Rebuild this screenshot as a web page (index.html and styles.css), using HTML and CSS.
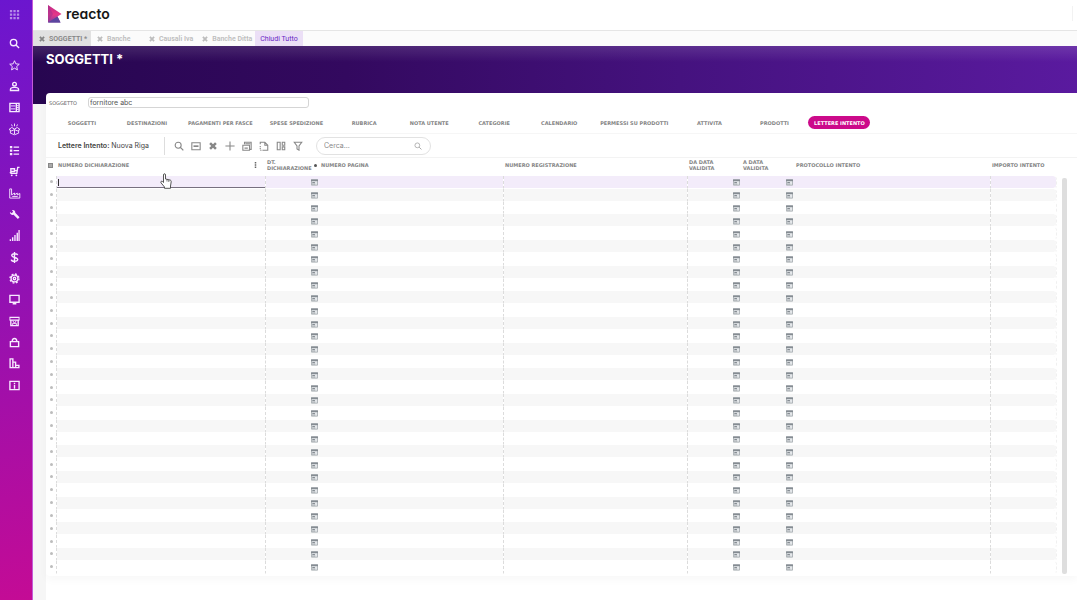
FILE: index.html
```html
<!DOCTYPE html>
<html lang="it">
<head>
<meta charset="utf-8">
<title>Reacto - Soggetti</title>
<link rel="stylesheet" href="styles.css">
</head>
<body>
<svg class="defs" aria-hidden="true">
  <symbol id="close" viewBox="0 0 10 10"><path d="M1.5 1.5 8.500 8.500M8.500 1.500 1.500 8.500" stroke="currentColor" stroke-width="3"/></symbol>
  <symbol id="search" viewBox="0 0 12 12"><circle cx="5" cy="5" r="3.600" fill="none" stroke="currentColor" stroke-width="1.300"/><path d="M7.700 7.700 11.200 11.200" stroke="currentColor" stroke-width="1.500"/></symbol>
  <symbol id="calendar" viewBox="0 0 8 8"><path d="M.5 1h7v6h-7z" fill="#e4e7ea" stroke="#a5abb0"/><path d="M0 .5h8v2H0z" fill="#858c92"/><path d="M1.500 3.500h3v1h-3zM1.500 5.200h1.500v1H1.500zM3.700 5.200h1v1h-1z" fill="#858c92"/></symbol>
</svg>
<div class="app">
  <nav class="sidebar" aria-label="Menu principale">
    <button class="apps" aria-label="Applicazioni"><svg viewBox="0 0 12 12"><path d="M1 1h2.500v2.500H1zM4.800 1h2.500v2.500H4.800zM8.600 1h2.500v2.500H8.600zM1 4.800h2.500v2.500H1zM4.800 4.800h2.500v2.500H4.800zM8.600 4.800h2.500v2.500H8.600zM1 8.600h2.500v2.500H1zM4.800 8.600h2.500v2.500H4.800zM8.600 8.600h2.500v2.500H8.600z" fill="#b58be8"/></svg></button>
    <div class="menu">
      <button aria-label="Cerca"><svg viewBox="0 0 12 12"><circle cx="5" cy="5" r="3.500"/><path d="M7.600 7.600 11 11"/></svg></button>
      <button aria-label="Preferiti"><svg viewBox="0 0 12 12"><path class="thin" d="m6 .8 1.500 3.400 3.700.4-2.800 2.500.8 3.700L6 8.900l-3.200 1.900.8-3.700L.8 4.600l3.700-.4z"/></svg></button>
      <button aria-label="Soggetti"><svg viewBox="0 0 12 12"><circle cx="6" cy="3.500" r="2"/><path d="M1.600 10.400V9c0-1.200 2.400-2 4.400-2s4.400.8 4.400 2v1.400z"/></svg></button>
      <button aria-label="Documenti"><svg viewBox="0 0 12 12"><path d="M1 1.500h10v9H1zM8 1.500v9"/><path class="thin" d="M2 4.300h5M2 7.500h5M8.500 4h2M8.500 6h2M8.500 8h2"/></svg></button>
      <button aria-label="Magazzino"><svg viewBox="0 0 12 12"><path class="thin" d="m0 6 3-2.200L6 5.500l3-1.700L12 6 9 7.500 6 6 3 7.500zM1.500 7v3L6 11.700l4.500-1.700V7M6 6v5M6-.5v3M2.700.5l1 2M9.300.5l-1 2"/></svg></button>
      <button aria-label="Elenchi"><svg viewBox="0 0 12 12"><path d="M1 1h2.600v2.600H1zM1 4.800h2.600v2.600H1zM1 8.600h2.600v2.600H1z" class="solid"/><path d="M5 2.300h6M5 6.100h6M5 9.900h6"/></svg></button>
      <button aria-label="Acquisti"><svg viewBox="0 0 12 12"><path d="M11.500 1.500h-2L8.500 8H2M2 3h4v3H2zM6 5h3M1 8l2-2"/><circle class="solid" cx="3" cy="10.200" r="1"/><circle class="solid" cx="8" cy="10.200" r="1"/></svg></button>
      <button aria-label="Produzione"><svg viewBox="0 0 12 12"><path class="thin" d="M.8 11V1h2v6.500L6 5.500v2l3-2v2l2.800-1.500v5zM3.500 9.200h6"/></svg></button>
      <button aria-label="Strumenti"><svg viewBox="0 0 12 12"><path class="solid" d="M1 3.200 3 4.500 4.500 3 3.200 1.200c2-.6 4 .8 3.600 3L11.500 9 9.700 10.900 5 6.300C3 7 .6 5.200 1 3.200z"/></svg></button>
      <button aria-label="Statistiche"><svg viewBox="0 0 12 12"><path d="M1.500 12v-2M4 12V8M6.500 12V5.500M9 12V3"/><path class="wide" d="M11 12V0"/></svg></button>
      <button aria-label="Contabilità"><svg viewBox="0 0 12 12"><path d="M9.500 3.500C9 1.300 3 1.300 3 3.800S9.500 5.700 9.500 8.300 2.700 10.800 2.500 8.300M6 0v12"/></svg></button>
      <button aria-label="Impostazioni"><svg viewBox="0 0 12 12"><circle cx="6" cy="6" r="3.700"/><circle cx="6" cy="6" r="1.300"/><circle cx="6" cy="6" r="4.900" stroke-dasharray="2 1.850"/></svg></button>
      <button aria-label="Schermo"><svg viewBox="0 0 12 12"><path d="M1 1.500h10v7.500H1zM4 10.700h4"/></svg></button>
      <button aria-label="Negozio"><svg viewBox="0 0 12 12"><path d="M.5 1.500h11M1 4.500h10M2 5v5.500h8V5"/><path class="thin" d="M1 2v3M11 2v3M4 5l2 3 2-3M4 10.500V8h4v2.500"/></svg></button>
      <button aria-label="Vendite"><svg viewBox="0 0 12 12"><path d="M1.500 5h9v5.500h-9zM3.500 5c0-4.400 5-4.400 5 0"/></svg></button>
      <button aria-label="Report"><svg viewBox="0 0 12 12"><path d="M1.200 1h3v9.500h-3zM4.200 4.500h3v6h-3zM7.200 8h3.600v2.500H7.200z"/></svg></button>
      <button aria-label="Informazioni"><svg viewBox="0 0 12 12"><path d="M1 1.500h10v9H1zM6 3v1.500M6 5.500v4"/></svg></button>
    </div>
  </nav>

  <main class="main">
    <header class="brand">
      <svg class="logo" viewBox="0 0 14 18"><defs><linearGradient id="lg" x1="0" y1="0" x2="0" y2="1"><stop offset="0" stop-color="#c02a86"/><stop offset=".55" stop-color="#e63888"/><stop offset="1" stop-color="#7d3fa0"/></linearGradient></defs><path d="M0 0 13.500 9 9.500 11.500 12.500 17.500H0z" fill="url(#lg)"/><path d="M0 17.500 9.500 11.500 12.500 17.500z" fill="#5b469f"/><path d="M0 0v17L5 9z" fill="#a43290" opacity=".6"/></svg>
      <span class="wordmark">reacto</span>
      <span class="brand-end"></span>
    </header>
    <div class="windows">
      <button class="window current"><svg><use href="#close"/></svg>SOGGETTI *</button>
      <button class="window"><svg><use href="#close"/></svg>Banche</button>
      <button class="window"><svg><use href="#close"/></svg>Causali Iva</button>
      <button class="window"><svg><use href="#close"/></svg>Banche Ditta</button>
      <button class="close-all">Chiudi Tutto</button>
    </div>
    <div class="hero"><h1>SOGGETTI *</h1></div>

    <section class="panel">
      <div class="subject">
        <label for="subject">SOGGETTO</label>
        <input id="subject" type="text" value="fornitore abc">
      </div>
      <div class="tabs">
        <button>SOGGETTI</button>
        <button>DESTINAZIONI</button>
        <button>PAGAMENTI PER FASCE</button>
        <button>SPESE SPEDIZIONE</button>
        <button>RUBRICA</button>
        <button>NOTA UTENTE</button>
        <button>CATEGORIE</button>
        <button>CALENDARIO</button>
        <button>PERMESSI SU PRODOTTI</button>
        <button>ATTIVITA</button>
        <button>PRODOTTI</button>
        <button class="active">LETTERE INTENTO</button>
      </div>
      <div class="toolbar">
        <p class="status"><b>Lettere Intento:</b> Nuova Riga</p>
        <div class="tools">
          <button aria-label="Cerca"><svg><use href="#search"/></svg></button>
          <button aria-label="Modifica"><svg viewBox="0 0 12 12"><path d="M1 2h10v8.500H1z"/><path class="bold" d="M3 6.200h6"/></svg></button>
          <button aria-label="Elimina"><svg viewBox="0 0 12 12"><path class="heavy" d="m2.500 2.500 7 7M9.500 2.500l-7 7"/></svg></button>
          <button aria-label="Aggiungi"><svg viewBox="0 0 12 12"><path d="M6 .5v11M.5 6h11"/></svg></button>
          <button aria-label="Salva"><svg viewBox="0 0 12 12"><path d="M3 4V1.500h8V10H9M1 5h8v6H1zM4 3.300h6M3 8.500h4"/></svg></button>
          <button aria-label="Nuovo documento"><svg viewBox="0 0 12 12"><path d="M1.500 4V1.500H7L10.500 5v6h-6M7 1.500V5h3.500"/><path d="M1.500 6v5h3" stroke-dasharray="1.500 1"/></svg></button>
          <button aria-label="Colonne"><svg viewBox="0 0 12 12"><path d="M1.500 1.500h3.500v9H1.500zM7.500 1.500h3v3.500h-3zM7.500 7h3v3.500h-3z"/></svg></button>
          <button aria-label="Filtra"><svg viewBox="0 0 12 12"><path d="M1.500 1.500h9L7.200 6v5L4.800 9.500V6z"/></svg></button>
        </div>
        <div class="find">
          <input type="search" aria-label="Cerca" placeholder="Cerca...">
          <svg><use href="#search"/></svg>
        </div>
      </div>
      <div class="grid">
        <table>
          <colgroup><col class="c-mark"><col class="c-number"><col class="c-date"><col class="c-page"><col class="c-page"><col class="c-date"><col class="c-until"><col><col class="c-amount"></colgroup>
          <thead>
            <tr>
              <th><input type="checkbox" checked aria-label="Seleziona tutto"></th>
              <th><span class="head">NUMERO DICHIARAZIONE <button class="more" aria-label="Opzioni colonna"><svg viewBox="0 0 4 8"><path d="M1 0h2v2H1zM1 3h2v2H1zM1 6h2v2H1z" fill="#666"/></svg></button></span></th>
              <th><span class="head">DT.<br>DICHIARAZIONE <svg class="sort" viewBox="0 0 4 4"><circle cx="2" cy="2" r="2" fill="#555"/></svg></span></th>
              <th>NUMERO PAGINA</th>
              <th>NUMERO REGISTRAZIONE</th>
              <th>DA DATA<br>VALIDITA</th>
              <th>A DATA<br>VALIDITA</th>
              <th>PROTOCOLLO INTENTO</th>
              <th>IMPORTO INTENTO</th>
            </tr>
          </thead>
          <tbody id="rows"></tbody>
        </table>
        <div class="scroll"></div>
        <svg class="pointer" viewBox="0 0 12 16"><path d="M3.500 9.500V2c0-1.700 2-1.700 2 0v4l4.500 1c1 .3 1.300.8 1.200 1.800L10.500 13v2.300h-6V14L1 9.800c-.8-1.200.8-2.200 1.600-1.200z" fill="#fff" stroke="#444" stroke-width=".9"/><path d="M7 6.500v2M8.800 7v2" stroke="#444" stroke-width=".7"/></svg>
      </div>
    </section>
  </main>
</div>
<script src="rows.js"></script>
</body>
</html>
```

FILE: rows.js
```js
const body = document.getElementById("rows");
const picker = '<button class="date" aria-label="Scegli data"><svg><use href="#calendar"/></svg></button>';
const dateColumns = [2, 5, 6];
for (let r = 0; r < 31; r++) {
  const tr = body.insertRow();
  for (let c = 0; c < 9; c++) {
    const td = tr.insertCell();
    if (c === 0) td.innerHTML = '<i class="dot"></i>';
    if (dateColumns.includes(c)) td.innerHTML = picker;
    if (r === 0 && c === 1) td.innerHTML = '<input class="edit" type="text" aria-label="Numero dichiarazione">';
  }
}
```

FILE: styles.css
```css
* { box-sizing: border-box; }
body { margin: 0; font-family: Inter, "Liberation Sans", sans-serif; font-size: 7px; color: #555; background: #fff; }
button { margin: 0; padding: 0; border: 0; background: none; font: inherit; color: inherit; white-space: nowrap; }
svg { display: block; flex: none; }
.defs { position: absolute; width: 0; height: 0; }
.app { display: flex; min-height: 100vh; }

.sidebar { flex: none; width: 33px; padding: 8px 4px 0 0; background: linear-gradient(170deg, #6b16cf, #8c12b6 42%, #c40b95); border-right: 1px solid #c45bd8; display: flex; flex-direction: column; align-items: center; }
.sidebar button { display: grid; place-items: center; }
.sidebar svg { width: 11px; height: 11px; }
.apps { height: 12px; }
.menu { margin-top: 13px; height: 363px; display: grid; grid-auto-rows: 1fr; }
.menu svg { fill: none; stroke: #f7eaff; stroke-width: 1.5; overflow: visible; }
.menu .thin { stroke-width: 1; }
.menu .wide { stroke: #dfa5ea; stroke-width: 2; }
.menu .solid { fill: #f7eaff; stroke: none; }

.main { flex: 1; min-width: 0; display: flex; flex-direction: column; background: linear-gradient(90deg, #f6f6f6 13px, #fff 13px); }
.brand { height: 31px; padding: 0 4px 3px 15px; display: flex; align-items: center; gap: 4px; background: #fff; border-bottom: 1px solid #e5e5e5; }
.logo { width: 14px; height: 18px; }
.wordmark { font-size: 14px; font-weight: 600; line-height: 18px; color: #161616; font-feature-settings: "cv11"; }
.brand-end { margin-left: auto; width: 1px; height: 15px; background: #f2f2f2; }

.windows { height: 15px; display: flex; background: #fbfbfb; color: #bdbdbd; font-family: Roboto, sans-serif; font-weight: 600; }
.window { padding: 0 3px 0 6px; min-width: 52px; display: flex; align-items: center; gap: 4px; }
.window svg { width: 6px; height: 6px; }
.window.current { min-width: 58px; background: #e1e1e1; color: #858585; }
.close-all { padding: 0 5px; background: #ebdff6; color: #6a1fc4; font-weight: 400; }

.hero { height: 58px; padding: 5px 13px; background: linear-gradient(rgba(255,255,255,.12), transparent 16px), linear-gradient(90deg, #270650, #33095f 30%, #45127f 62%, #5a1a9f); }
h1 { margin: 0; font-size: 13px; line-height: 16px; font-weight: 700; color: #fff; }

.panel { flex: 1; margin: -11px 0 24px 13px; display: flex; flex-direction: column; background: #fff; border-radius: 4px 0 0 4px; box-shadow: 0 4px 8px rgba(0,0,0,.03); }
.subject { height: 19px; padding: 0 3px; display: flex; align-items: center; }
.subject label { width: 39px; font-family: "DejaVu Sans", sans-serif; font-size: 5px; font-weight: 400; color: #666; }
.subject input { width: 221px; height: 11px; padding: 0 1px; border: 1px solid #d5d5d5; border-radius: 3px; font: 7px Inter, sans-serif; color: #555; }
.tabs { height: 22px; padding: 0 5px; display: flex; align-items: center; gap: 3px; border-bottom: 1px solid #f6f6f6; font-family: "DejaVu Sans", sans-serif; font-size: 5px; font-weight: 700; color: #858585; }
.tabs button { min-width: 62px; height: 13px; padding: 0 7px; }
.tabs .active { padding: 0 4px; background: #cc0a8a; color: #fff; border-radius: 7px; }

.toolbar { height: 24px; padding-left: 12px; display: flex; align-items: center; border-bottom: 1px solid #f3f3f3; color: #444; }
.status { margin: 0; width: 107px; height: 18px; line-height: 18px; border-right: 1px solid #ddd; }
.status b { font-weight: 600; }
.tools { display: flex; gap: 7px; padding: 0 13px 0 9px; color: #888; }
.tools svg { width: 10px; height: 10px; fill: none; stroke: #888; stroke-width: 1.3; }
.tools .bold { stroke-width: 2; }
.tools .heavy { stroke-width: 3; }
.find { width: 115px; height: 18px; padding: 0 8px 0 7px; border: 1px solid #e2e2e2; border-radius: 9px; display: flex; align-items: center; color: #aaa; }
.find input { flex: 1; min-width: 0; padding: 0; border: 0; outline: 0; background: none; font: 7px Inter, sans-serif; }
.find input::placeholder { color: #888; }
.find svg { width: 8px; height: 8px; }

.grid { position: relative; flex: 1; display: flex; padding-bottom: 2px; }
table { flex: 1; min-width: 0; table-layout: fixed; border-collapse: separate; border-spacing: 0; }
.c-mark { width: 11px; }
.c-number { width: 209px; }
.c-date { width: 54px; }
.c-until { width: 53px; }
.c-page { width: 184px; }
.c-amount { width: 66px; }
thead tr { height: 18px; }
th { padding: 0 0 4px 1px; font-family: "DejaVu Sans", sans-serif; font-size: 5px; line-height: 6px; font-weight: 700; text-align: left; color: #858585; white-space: nowrap; }
th input { appearance: none; display: block; margin: 0 1px; width: 5px; height: 5px; border: 1px solid #888; background: #aaa; }
.head { display: flex; justify-content: space-between; align-items: center; }
.more { padding-right: 9px; }
.more svg { width: 3px; height: 6px; }
.sort { margin-right: 3px; width: 3px; height: 3px; }
tbody tr { height: 12px; }
td { padding: 0; line-height: 0; border-bottom: 1px solid #fff; background-clip: padding-box; }
tbody td:nth-child(-n+2), tbody td:nth-child(4), tbody td:nth-child(5), tbody td:nth-child(8) { border-right: 1px dashed #dcdcdc; }
tbody tr:nth-child(even) td:not(:first-child) { background-color: #f7f7f7; }
tbody tr:first-child td:not(:first-child) { background-color: #f3ecfa; }
tbody td:last-child { border-radius: 0 4px 4px 0; border-right: 1px dashed #f0f0f0; }
tbody tr:first-child td:nth-child(2) { vertical-align: bottom; }
.dot { display: block; margin: 0 auto; width: 3px; height: 3px; border-radius: 50%; background: #bdbdbd; }
.date { display: block; margin-left: auto; padding: 2px 2px 0 0; }
.date svg { width: 7px; height: 7px; }
.edit { display: block; width: 100%; height: 11px; padding: 0; border: 0; border-bottom: 1px solid #77707f; outline: 0; background: linear-gradient(#333, #333) 1px 2px / 1px 7px no-repeat; font: 7px Inter, sans-serif; }
.scroll { flex: none; width: 5px; margin: 20px 10px 0 5px; border-radius: 2px; background: #dedede; }
.pointer { position: absolute; left: 114px; top: 15px; width: 12px; height: 16px; }
```
